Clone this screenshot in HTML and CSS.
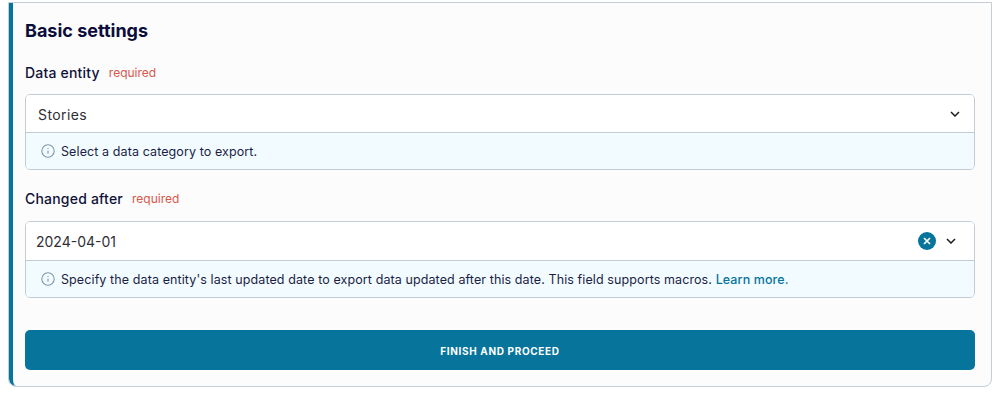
FILE: index.html
```html
<!DOCTYPE html>
<html lang="en">
<head>
<meta charset="utf-8">
<title>Basic settings</title>
<link rel="stylesheet" href="styles.css">
</head>
<body>
<section class="card">
  <div class="card-inner">
    <h2 class="title">Basic settings</h2>

    <div class="label-row label-first">
      <span class="label">Data entity</span><span class="required">required</span>
    </div>
    <div class="field">
      <div class="control">
        <span class="value value-a">Stories</span>
        <svg class="chevron chevron-a" viewBox="0 0 10 6"><path d="M1 1l4 4 4-4"/></svg>
      </div>
      <div class="hint">
        <svg class="info" viewBox="0 0 14 14"><circle cx="7" cy="7" r="6.2"/><path d="M7 6.4v3.4M7 4.1v.9"/></svg>
        <span>Select a data category to export.</span>
      </div>
    </div>

    <div class="label-row label-second">
      <span class="label">Changed after</span><span class="required">required</span>
    </div>
    <div class="field">
      <div class="control control-b">
        <span class="value">2024-04-01</span>
        <svg class="clear" viewBox="0 0 18 18"><circle cx="9" cy="9" r="9"/><path d="M6 6l6 6M12 6l-6 6"/></svg>
        <svg class="chevron" viewBox="0 0 10 6"><path d="M1 1l4 4 4-4"/></svg>
      </div>
      <div class="hint">
        <svg class="info" viewBox="0 0 14 14"><circle cx="7" cy="7" r="6.2"/><path d="M7 6.4v3.4M7 4.1v.9"/></svg>
        <span>Specify the data entity's last updated date to export data updated after this date. This field supports macros. <a class="link" href="#">Learn more.</a></span>
      </div>
    </div>

    <button class="submit" type="button">FINISH AND PROCEED</button>
  </div>
</section>
</body>
</html>
```
FILE: styles.css
```css
* { box-sizing: border-box; }
html, body { margin: 0; background: #fff; }
body {
  width: 1002px;
  height: 403px;
  padding: 2px 10px 0 8px;
  overflow: hidden;
  font-family: "Inter", "Liberation Sans", sans-serif;
  color: #0f1238;
}
.card {
  height: 385px;
  border: 1px solid #c3ced6;
  border-radius: 0 0 8px 8px;
  background: #fcfcfc;
  overflow: hidden;
}
.card-inner {
  height: 100%;
  border-left: 4px solid #07749c;
  border-bottom-left-radius: 7px;
  padding: 16px 16px 0 12px;
}
.title {
  margin: 0;
  font-size: 18px;
  line-height: 24px;
  font-weight: 700;
  color: #0b0d3a;
}
.label-row {
  display: flex;
  align-items: center;
  height: 20px;
  gap: 9px;
}
.label-first { margin-top: 19px; margin-bottom: 12px; }
.label-second { margin-top: 18px; margin-bottom: 13px; }
.label {
  font-size: 14px;
  font-weight: 500;
  letter-spacing: 0.2px;
  color: #0f1238;
}
.required {
  font-size: 12px;
  color: #d8574c;
}
.field {
  border: 1px solid #c3ccd4;
  border-radius: 5px;
  overflow: hidden;
}
.control {
  display: flex;
  align-items: center;
  height: 37px;
  background: #fff;
  padding: 0 15px 0 11px;
}
.control-b {
  height: 38px;
  padding: 0 18px 0 10px;
}
.value {
  flex: 1;
  font-size: 14px;
  color: #2f2f33;
}
.value-a {
  padding: 2px 0 0 1px;
  letter-spacing: 0.4px;
}
.chevron {
  width: 10px;
  height: 6px;
  fill: none;
  stroke: #1c1c22;
  stroke-width: 1.5;
}
.chevron-a { margin-right: -1px; }
.clear {
  width: 18px;
  height: 18px;
  margin-right: 10px;
}
.clear circle { fill: #07749c; }
.clear path {
  fill: none;
  stroke: #fff;
  stroke-width: 1.7;
}
.hint {
  display: flex;
  align-items: center;
  height: 37px;
  gap: 6px;
  padding-left: 15px;
  border-top: 1px solid #c3ccd4;
  background: #f2fbff;
  font-size: 12.5px;
  letter-spacing: 0.1px;
  color: #1b1e44;
}
.info {
  flex: none;
  width: 14px;
  height: 14px;
  fill: none;
  stroke: #7f9aa8;
  stroke-width: 1.1;
}
.link {
  color: #07749c;
  font-weight: 500;
  text-decoration: none;
}
.submit {
  display: block;
  width: 100%;
  height: 40px;
  margin-top: 32px;
  padding: 2px 0 0;
  border: 0;
  border-radius: 5px;
  background: #07749c;
  color: #fff;
  font-family: inherit;
  font-size: 10px;
  font-weight: 700;
  letter-spacing: 0.65px;
}
```
